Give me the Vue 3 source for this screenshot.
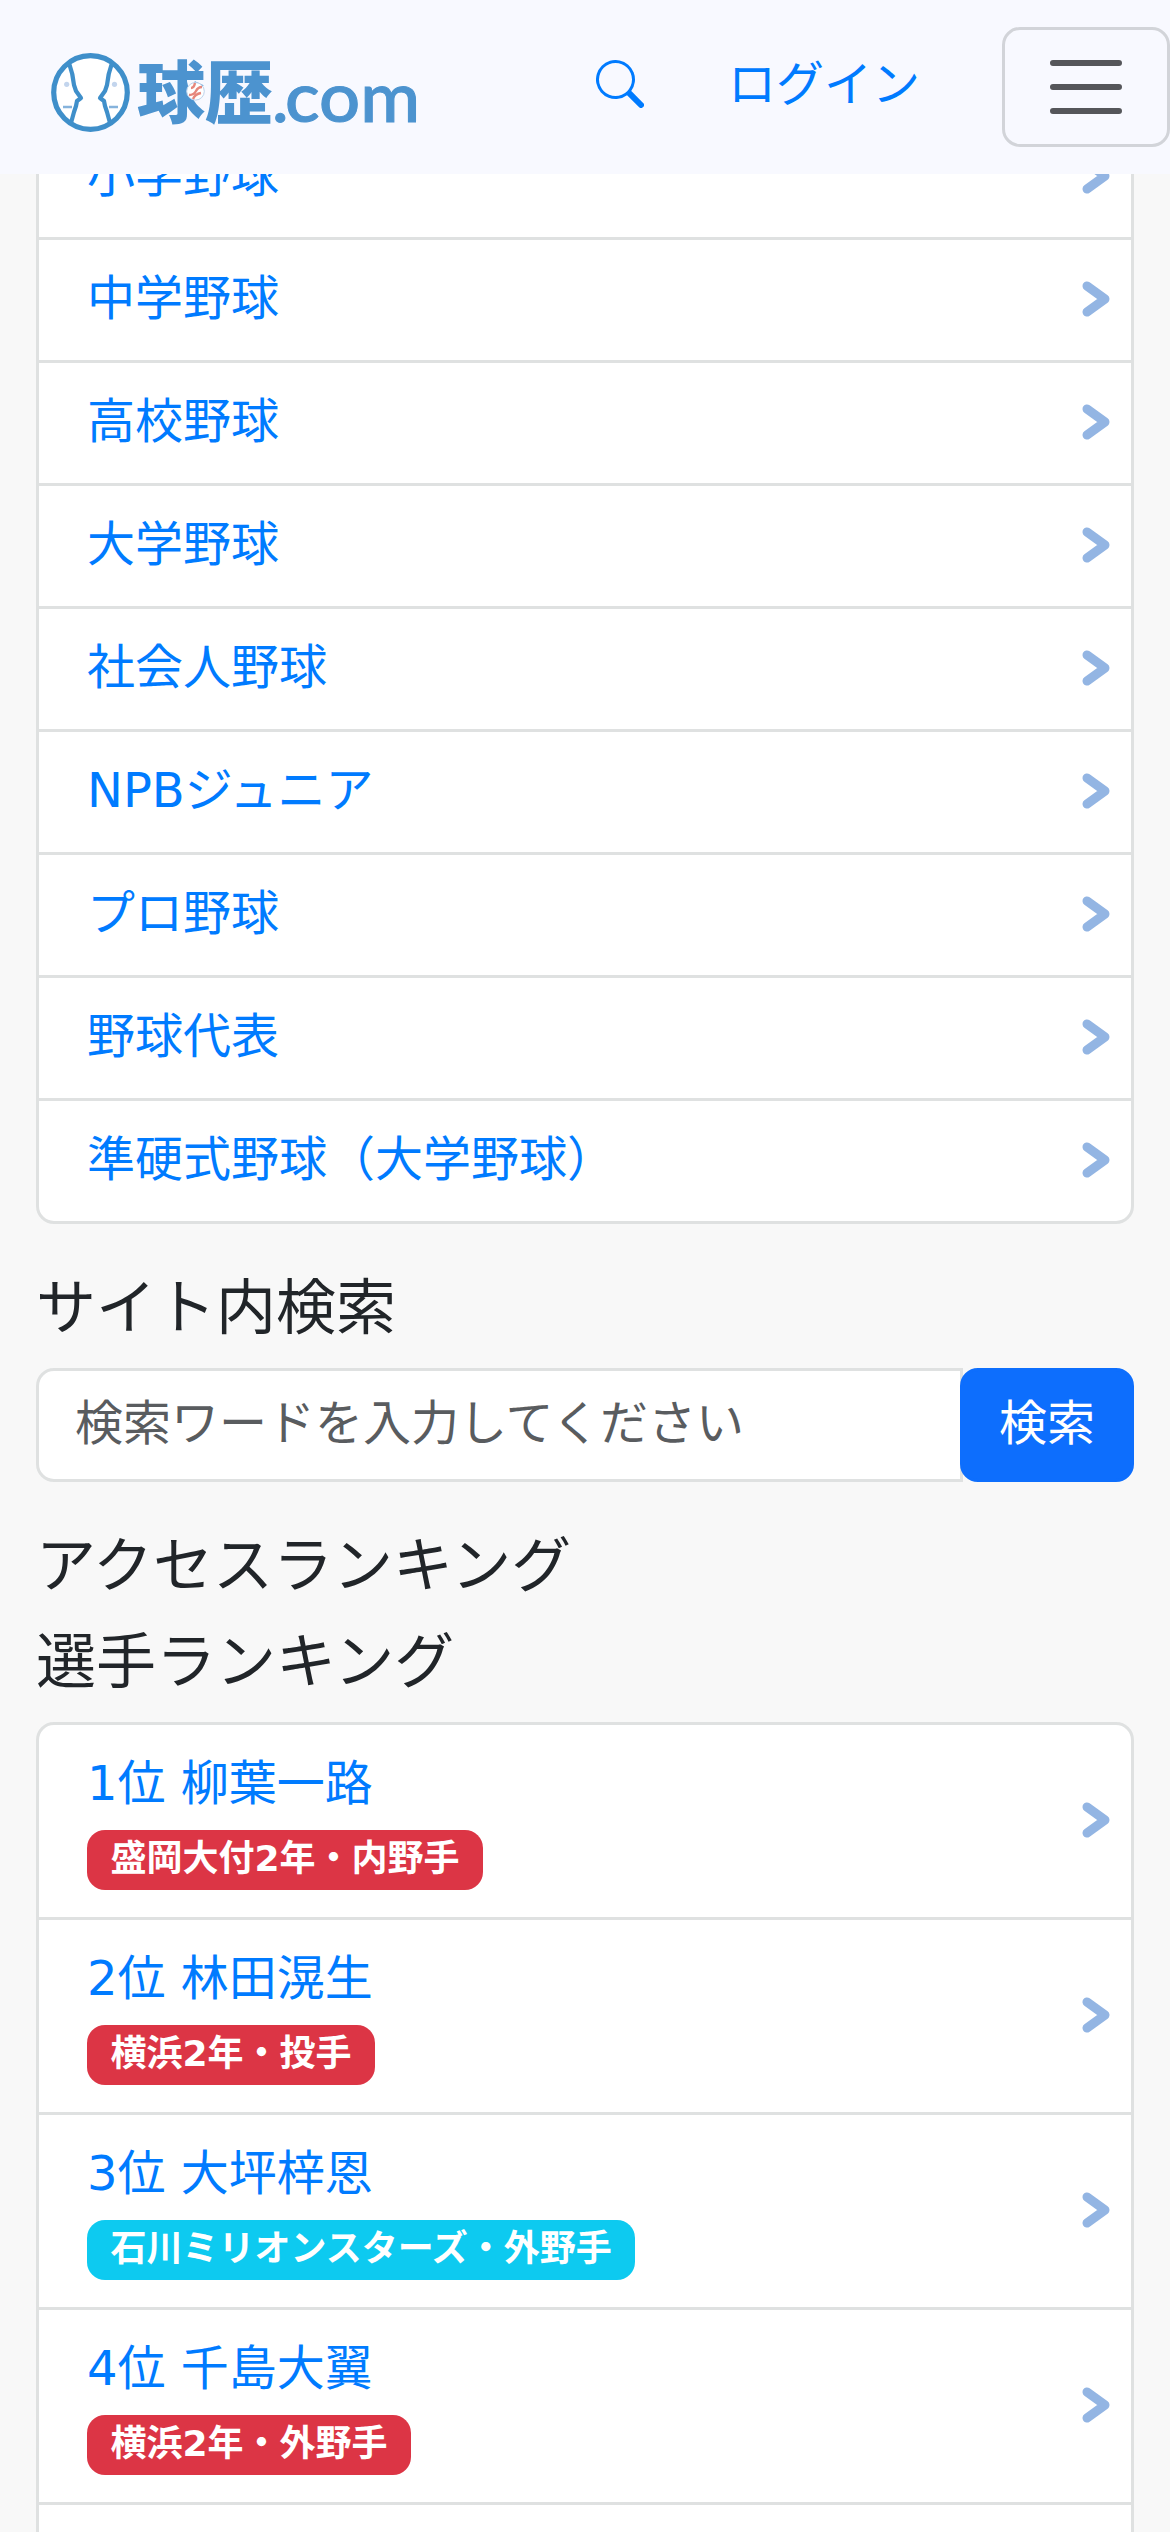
<script setup>
const categories = [
  '小学野球', '中学野球', '高校野球', '大学野球', '社会人野球',
  'NPBジュニア', 'プロ野球', '野球代表', '準硬式野球（大学野球）',
]
const players = [
  { rank: 1, name: '柳葉一路', badge: '盛岡大付2年・内野手', kind: 'danger' },
  { rank: 2, name: '林田滉生', badge: '横浜2年・投手', kind: 'danger' },
  { rank: 3, name: '大坪梓恩', badge: '石川ミリオンスターズ・外野手', kind: 'info' },
  { rank: 4, name: '千島大翼', badge: '横浜2年・外野手', kind: 'danger' },
]
</script>

<template>
  <div class="page">
    <header class="navbar">
      <svg class="logo" width="380" height="140" viewBox="0 -27 380 140" role="img" aria-label="球歴.com">
        <circle cx="45.5" cy="47.5" r="36.8" fill="#fff" stroke="#3f8fca" stroke-width="5.2" />
        <g fill="none" stroke="#3f8fca" stroke-width="4.2" stroke-linejoin="round">
          <path d="M24 18Q28 29 29 40L31 46L36 53L32 56L31 61L29 67L26 78" />
          <path d="M67 18Q63 29 62 40L60 46L55 53L59 56L60 61L62 67L65 78" />
        </g>
        <path d="M18 62h9M64 62h9" stroke="#86b3dc" stroke-width="2.6" />
        <circle cx="21.7" cy="39.3" r="2.6" fill="#c3d5ed" />
        <circle cx="69.5" cy="39.3" r="2.6" fill="#c3d5ed" />
        <g class="logo-text">
          <text class="kanji" x="92" y="73" textLength="136" lengthAdjust="spacingAndGlyphs">球歴</text>
          <text class="latin" x="227" y="77">.</text>
          <text class="latin" x="240" y="77" textLength="135" lengthAdjust="spacingAndGlyphs">com</text>
        </g>
        <circle cx="150.5" cy="46.3" r="8.8" fill="#fff" stroke="#bcd2eb" stroke-width="1" />
        <path d="M146 43q3 0 4-5M144 50q5 0 7-4t6-4M148 54q2-5 8-6" stroke="#e6877c" stroke-width="2.4" fill="none" />
      </svg>
      <svg class="search-icon" width="48" height="48" viewBox="0 0 16 16" fill="#007bff">
        <path d="M11.742 10.344a6.5 6.5 0 1 0-1.397 1.398h-.001c.03.04.062.078.098.115l3.85 3.85a1 1 0 0 0 1.415-1.414l-3.85-3.85a1.007 1.007 0 0 0-.115-.1zM12 6.5a5.5 5.5 0 1 1-11 0 5.5 5.5 0 0 1 11 0z" />
      </svg>
      <a class="login">ログイン</a>
      <button class="toggler" aria-label="メニュー">
        <svg width="90" height="90" viewBox="0 0 30 30">
          <path d="M4 7h22M4 15h22M4 23h22" stroke="#55565a" stroke-width="2" stroke-linecap="round" />
        </svg>
      </button>
    </header>

    <main class="content">
      <ul class="list first">
        <li v-for="c in categories" :key="c" class="item">
          <a>{{ c }}</a>
          <svg class="chevron" width="34" height="40" viewBox="0 0 34 40"><path d="M8 7L26 20L8 33" /></svg>
        </li>
      </ul>

      <h2>サイト内検索</h2>
      <form class="search" @submit.prevent>
        <input type="text" placeholder="検索ワードを入力してください">
        <button>検索</button>
      </form>

      <h2>アクセスランキング</h2>
      <h2 class="sub">選手ランキング</h2>
      <ul class="list">
        <li v-for="p in players" :key="p.rank" class="item">
          <a>
            <span class="name">{{ p.rank }}位 {{ p.name }}</span>
            <span class="badge" :class="p.kind">{{ p.badge }}</span>
          </a>
          <svg class="chevron" width="34" height="40" viewBox="0 0 34 40"><path d="M8 7L26 20L8 33" /></svg>
        </li>
        <li class="item next"></li>
      </ul>
    </main>
  </div>
</template>

<style>
body {
  margin: 0;
  overflow: hidden;
}
</style>

<style scoped>
.page {
  position: relative;
  height: 2532px;
  overflow: hidden;
  background: #f8f8f8;
  color: #212529;
  font-family: "DejaVu Sans", "Noto Sans CJK JP", sans-serif;
  font-size: 48px;
  line-height: 1.5;
}
.page * { box-sizing: border-box; }

.navbar {
  position: absolute;
  top: 0;
  left: 0;
  z-index: 2;
  width: 100%;
  height: 174px;
  display: flex;
  align-items: center;
  background: #f8f9ff;
}
.logo { margin-left: 45px; margin-top: 2px; }
.logo-text { fill: #4c93cf; }
.kanji { font: 900 68px "Noto Sans CJK JP", sans-serif; }
.latin { font: 500 70px Lato, sans-serif; stroke: #4c93cf; stroke-width: 1; }
.search-icon { margin-left: 171px; margin-top: -6px; }
.login { margin-left: 84px; margin-top: -6px; color: #007bff; }
.toggler {
  display: flex;
  margin: 0 0 0 auto;
  padding: 12px 36px;
  border: 3px solid #d2d4d9;
  border-radius: 18px;
  background: none;
}

.content { padding: 114px 36px 0; }
.list {
  margin: 0;
  padding: 0;
  list-style: none;
  background: #fff;
  border: 3px solid #dfe1e1;
  border-radius: 18px;
}
.item {
  display: flex;
  align-items: center;
  justify-content: space-between;
  padding: 22px 18px 26px 48px;
  border-bottom: 3px solid #dfe1e1;
}
.item:last-child { border-bottom: 0; }
.item a { color: #007bff; }
.next { height: 195px; }
.name { display: block; }
.chevron {
  flex: none;
  margin-top: 1px;
  fill: none;
  stroke: #93b5e3;
  stroke-width: 9;
  stroke-linecap: round;
  stroke-linejoin: round;
}
.badge {
  display: block;
  width: fit-content;
  height: 60px;
  margin: 11px 0 1px;
  padding: 11px 23.4px 13px;
  border-radius: 18px;
  color: #fff;
  font-size: 36px;
  font-weight: 700;
  line-height: 36px;
  white-space: nowrap;
}
.danger { background: #dc3545; }
.info { background: #0dcaf0; }

h2 {
  margin: 48px 0 24px;
  font-size: 60px;
  font-weight: 400;
  line-height: 72px;
}
h2.sub { margin-top: 0; }

.search { display: flex; }
.search input {
  flex: 1;
  min-width: 0;
  height: 114px;
  padding: 16px 36px 20px;
  border: 3px solid #dfe1e1;
  border-radius: 18px 0 0 18px;
  background: #fff;
  font: inherit;
}
.search input::placeholder { color: #595c5f; opacity: 1; }
.search button {
  margin: 0 0 0 -3px;
  padding: 16px 36px 20px;
  border: 3px solid #0d6efd;
  border-radius: 18px;
  background: #0d6efd;
  color: #fff;
  font: inherit;
}
</style>
